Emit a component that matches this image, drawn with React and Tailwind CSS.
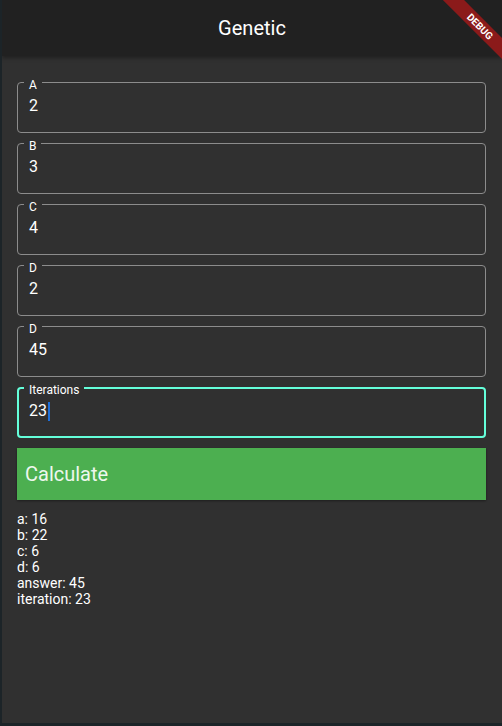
import React from "react";

const fields = [
  { label: "A", value: "2" },
  { label: "B", value: "3" },
  { label: "C", value: "4" },
  { label: "D", value: "2" },
  { label: "D", value: "45" },
];

const results = ["a: 16", "b: 22", "c: 6", "d: 6", "answer: 45", "iteration: 23"];

function Field({ label, value, focused }) {
  return (
    <div
      className={
        "relative h-[51px] rounded-[4px] " +
        (focused ? "border-2 border-[#64ffda]" : "border border-[#8c8c8c]")
      }
    >
      {/* label sits on the top border */}
      <span
        className={
          "absolute px-[5px] bg-[#303030] text-[12px] leading-[12px] text-white " +
          (focused ? "left-[5px] top-[-5px]" : "left-[6px] top-[-4px]")
        }
      >
        {label}
      </span>
      <div
        className={
          "flex items-center text-[16px] leading-[20px] text-white " +
          (focused ? "pl-[10px] pt-[12px]" : "pl-[11px] pt-[13px]")
        }
      >
        <span>{value}</span>
        {focused && <span className="ml-[1px] inline-block w-[2px] h-[19px] bg-[#1e6fd9]" />}
      </div>
    </div>
  );
}

export default function App() {
  return (
    <div
      className="relative w-[502px] h-[726px] overflow-hidden bg-[#303030] border-l-[2px] border-[#1c2428]"
      style={{ fontFamily: "Roboto, 'Liberation Sans', sans-serif" }}
    >
      {/* app bar */}
      <div className="h-[56px] bg-[#212121] flex items-center justify-center shadow-[0_2px_4px_rgba(0,0,0,0.35)]">
        <h1 className="text-[20px] text-white font-normal">Genetic</h1>
      </div>

      {/* debug banner */}
      <div className="absolute top-[19px] right-[-38px] w-[120px] h-[15px] rotate-45 bg-[#8b1a1a] flex items-center justify-center">
        <span className="text-[10px] font-bold leading-none text-white">DEBUG</span>
      </div>

      <div className="pl-[15px] pr-[16px] pt-[26px] flex flex-col gap-[10px]">
        {fields.map((f, i) => (
          <Field key={i} label={f.label} value={f.value} />
        ))}
        <Field label="Iterations" value="23" focused />
        <button
          type="button"
          className="h-[52px] bg-[#4caf50] text-left pl-[8px] text-[20px] text-[#eef7ee] shadow-[0_1px_2px_rgba(0,0,0,0.4)]"
        >
          Calculate
        </button>
      </div>

      <div className="pl-[15px] pt-[11px] text-[14px] leading-[16px] text-white">
        {results.map((r) => (
          <div key={r}>{r}</div>
        ))}
      </div>

      <div className="absolute bottom-0 left-0 right-0 h-[3px] bg-[#1c2428]" />
    </div>
  );
}
